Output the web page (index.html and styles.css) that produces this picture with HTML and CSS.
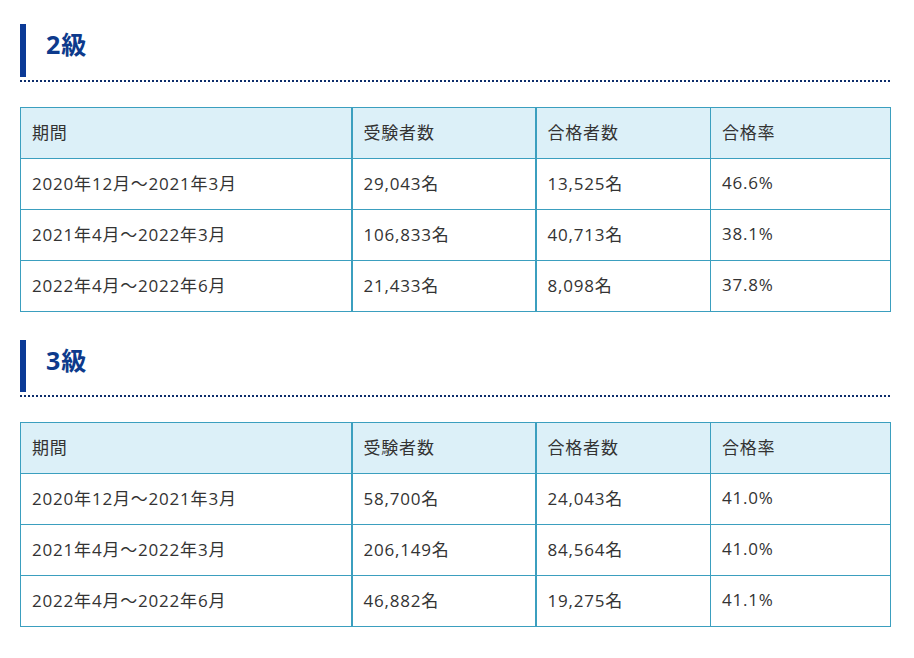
FILE: index.html
```html
<!DOCTYPE html>
<html lang="ja">
<head>
<meta charset="utf-8">
<link rel="stylesheet" href="styles.css">
</head>
<body>
<div class="page">
  <section class="grade">
    <div class="heading-wrap"><h2 class="heading">2級</h2></div>
    <table class="stats">
      <colgroup><col class="c1"><col class="c2"><col class="c3"><col class="c4"></colgroup>
      <tr class="head"><th>期間</th><th>受験者数</th><th>合格者数</th><th>合格率</th></tr>
      <tr><td>2020年12月～2021年3月</td><td>29,043名</td><td>13,525名</td><td>46.6%</td></tr>
      <tr><td>2021年4月～2022年3月</td><td>106,833名</td><td>40,713名</td><td>38.1%</td></tr>
      <tr><td>2022年4月～2022年6月</td><td>21,433名</td><td>8,098名</td><td>37.8%</td></tr>
    </table>
  </section>
  <section class="grade">
    <div class="heading-wrap"><h2 class="heading">3級</h2></div>
    <table class="stats">
      <colgroup><col class="c1"><col class="c2"><col class="c3"><col class="c4"></colgroup>
      <tr class="head"><th>期間</th><th>受験者数</th><th>合格者数</th><th>合格率</th></tr>
      <tr><td>2020年12月～2021年3月</td><td>58,700名</td><td>24,043名</td><td>41.0%</td></tr>
      <tr><td>2021年4月～2022年3月</td><td>206,149名</td><td>84,564名</td><td>41.0%</td></tr>
      <tr><td>2022年4月～2022年6月</td><td>46,882名</td><td>19,275名</td><td>41.1%</td></tr>
    </table>
  </section>
</div>
</body>
</html>
```
FILE: styles.css
```css
html, body { margin: 0; padding: 0; background: #fff; }
body {
  font-family: "Open Sans", "Noto Sans CJK JP", sans-serif;
  color: #333;
}
.page { width: 870px; padding: 24px 0 0 20px; }
.grade { margin-bottom: 28px; }
.heading-wrap {
  border-bottom: 2px dotted #0d2d6b;
  padding-bottom: 3px;
}
.heading {
  margin: 0;
  height: 53px;
  line-height: 40px;
  border-left: 6px solid #0b3a96;
  padding-left: 20px;
  font-family: "Noto Sans", "Noto Sans CJK JP", sans-serif;
  font-size: 25px;
  letter-spacing: 1px;
  font-weight: 700;
  color: #0d3a8c;
}
.grade + .grade .heading { height: 52px; }
.stats {
  margin-top: 25px;
  width: 870px;
  border-collapse: collapse;
  table-layout: fixed;
  font-size: 17px;
  letter-spacing: 0.8px;
}
.c1 { width: 331px; }
.c2 { width: 184px; }
.c3 { width: 175px; }
.c4 { width: 180px; }
.stats th, .stats td {
  border: 1px solid #3b9fbf;
  height: 47px;
  padding: 0 0 3px 11px;
  text-align: left;
  font-weight: 400;
  color: #333;
}
.stats th:nth-child(2), .stats td:nth-child(2),
.stats th:nth-child(3), .stats td:nth-child(3) { border-left-width: 2px; }
.stats tr.head th { background: #dcf0f8; }
```
